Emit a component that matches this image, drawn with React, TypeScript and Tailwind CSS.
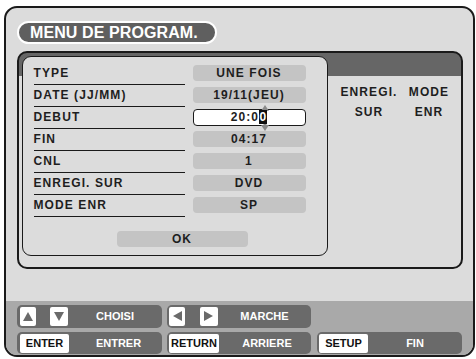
import React from "react";

const ROWS = [
  { label: "TYPE", value: "UNE FOIS" },
  { label: "DATE (JJ/MM)", value: "19/11(JEU)" },
  { label: "DEBUT", value: "20:00", edit: true },
  { label: "FIN", value: "04:17" },
  { label: "CNL", value: "1" },
  { label: "ENREGI. SUR", value: "DVD" },
  { label: "MODE ENR", value: "SP" },
];

const Tri = ({ dir }: { dir: "up" | "down" | "left" | "right" }) => {
  const pts = {
    up: "5,1 10,10 0,10",
    down: "0,1 10,1 5,10",
    left: "1,5 10,0 10,10",
    right: "0,0 9,5 0,10",
  }[dir];
  return (
    <svg width="10" height="11" viewBox="0 0 10 11">
      <polygon points={pts} fill="#6a6a6a" />
    </svg>
  );
};

const Key = ({ children, className = "" }: { children: React.ReactNode; className?: string }) => (
  <div className={`h-[19px] bg-white rounded-[2px] flex items-center justify-center text-[11px] font-bold text-[#111] ${className}`}>
    {children}
  </div>
);

const EditField = () => (
  <div className="relative ml-[8px] w-[113px] h-[17px] rounded-[4px] border-[1.5px] border-[#1a1a1a] bg-white flex items-center justify-center text-[12px] font-bold tracking-[1.1px] text-[#1e1e1e]">
    <svg
      className="absolute left-[67px] top-[-5px]"
      width="8"
      height="26"
      viewBox="0 0 8 26"
    >
      <polygon points="4,0 8,6 0,6" fill="#8a8a8a" />
      <rect x="2.5" y="6" width="3" height="14" fill="#8a8a8a" />
      <polygon points="0,20 8,20 4,26" fill="#8a8a8a" />
    </svg>
    <span className="relative">
      20:0<span className="bg-[#111] text-white pl-[0.5px]">0</span>
    </span>
  </div>
);

export default function App() {
  return (
    <div className="w-[476px] h-[359px] bg-white pt-[6px] pl-[4px] font-['Liberation_Sans',Arial,sans-serif]">
      <div className="w-[471px] h-[351px] border-2 border-[#1a1a1a] rounded-[13px] bg-[#dcdcdc] overflow-hidden flex flex-col">
        {/* Title */}
        <div className="ml-[11px] mt-[13px] w-[200px] h-[23px] rounded-full border-2 border-white bg-[#5f5f5f] flex items-center pl-[11px] text-white text-[16px] font-bold leading-none tracking-[0.1px]">
          MENU DE PROGRAM.
        </div>

        {/* Panel */}
        <div className="ml-[11px] mt-[7px] w-[446px] h-[218px] border-2 border-[#1a1a1a] rounded-[10px] bg-[linear-gradient(to_bottom,#666666_23px,#dcdcdc_23px)] flex items-start">
          <div className="ml-[3px] mt-[3px] w-[306px] h-[200px] border-[1.5px] border-[#1a1a1a] rounded-[9px] bg-[#dcdcdc] pt-[7.5px] pl-[10.5px]">
            {ROWS.map((r) => (
              <div key={r.label} className="flex h-[22px]">
                <div className="w-[151px] h-[20px] border-b border-[#1a1a1a] text-[12px] font-bold tracking-[1.1px] leading-[16px] text-[#1e1e1e]">
                  {r.label}
                </div>
                {r.edit ? (
                  <EditField />
                ) : (
                  <div className="ml-[8px] w-[113px] h-[16px] rounded-[4px] bg-[#c4c4c4] flex items-center justify-center text-[12px] font-bold tracking-[1.1px] text-[#1e1e1e]">
                    {r.value}
                  </div>
                )}
              </div>
            ))}
            <div className="mt-[12px] ml-[83px] w-[131px] h-[16px] rounded-[4px] bg-[#c4c4c4] flex items-center justify-center text-[12px] font-bold tracking-[1.1px] text-[#1e1e1e]">
              OK
            </div>
          </div>

          <div className="ml-[11px] pt-[29px] grid grid-cols-[60px_60px] text-center text-[12px] font-bold tracking-[1.1px] leading-[20px] text-[#1e1e1e]">
            <span>ENREGI.</span>
            <span>MODE</span>
            <span>SUR</span>
            <span>ENR</span>
          </div>
        </div>

        {/* Key guide */}
        <div className="mt-auto h-[54px] bg-[#a9a9a9] pt-[4px] pl-[11px] flex flex-col gap-[4px]">
          <div className="flex h-[23px]">
            <div className="w-[145px] rounded-[5px] bg-[#6a6a6a] flex items-center pl-[3px]">
              <Key className="w-[16px]">
                <Tri dir="up" />
              </Key>
              <Key className="w-[18px] ml-[14px]">
                <Tri dir="down" />
              </Key>
              <span className="flex-1 text-center text-white text-[11px] font-bold">CHOISI</span>
            </div>
            <div className="ml-[5px] w-[144px] rounded-[5px] bg-[#6a6a6a] flex items-center pl-[2px]">
              <Key className="w-[16px]">
                <Tri dir="left" />
              </Key>
              <Key className="w-[18px] ml-[15px]">
                <Tri dir="right" />
              </Key>
              <span className="flex-1 text-center text-white text-[11px] font-bold">MARCHE</span>
            </div>
          </div>
          <div className="flex h-[22px]">
            <div className="w-[145px] rounded-[5px] bg-[#6a6a6a] flex items-center pl-[3px]">
              <Key className="w-[49px]">ENTER</Key>
              <span className="flex-1 text-center text-white text-[11px] font-bold pl-[6px]">ENTRER</span>
            </div>
            <div className="ml-[5px] w-[144px] rounded-[5px] bg-[#6a6a6a] flex items-center pl-[2px]">
              <Key className="w-[50px]">RETURN</Key>
              <span className="flex-1 text-center text-white text-[11px] font-bold pl-[4px]">ARRIERE</span>
            </div>
            <div className="ml-[6px] w-[145px] rounded-[5px] bg-[#6a6a6a] flex items-center pl-[2px]">
              <Key className="w-[49px]">SETUP</Key>
              <span className="flex-1 text-center text-white text-[11px] font-bold">FIN</span>
            </div>
          </div>
        </div>
      </div>
    </div>
  );
}
